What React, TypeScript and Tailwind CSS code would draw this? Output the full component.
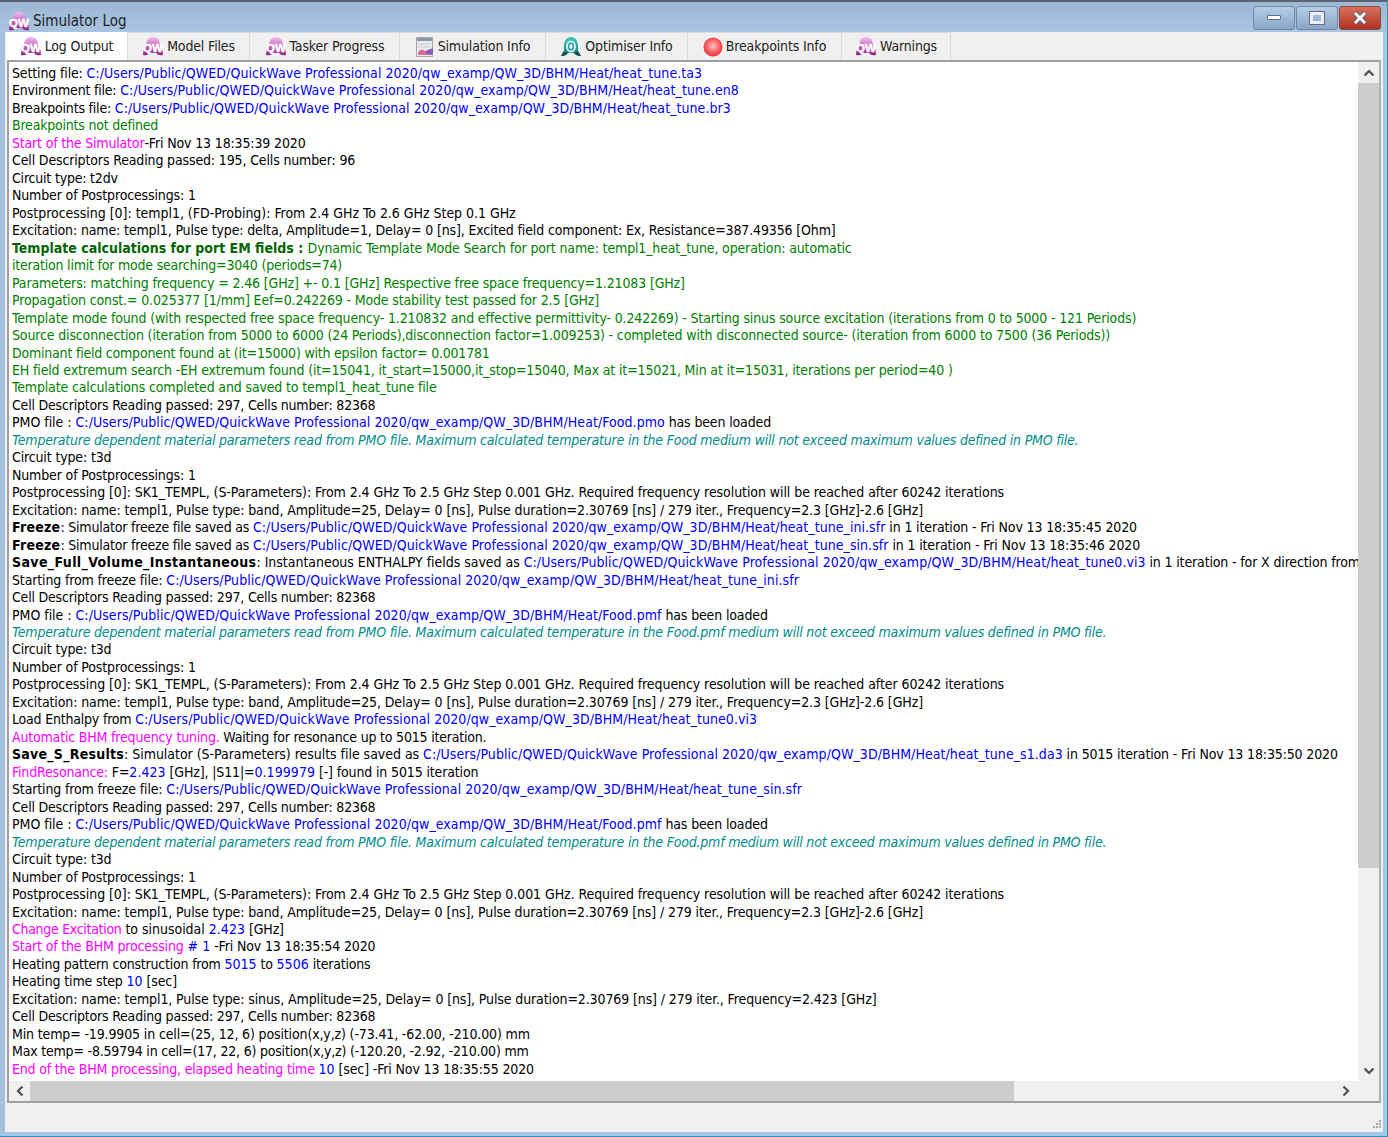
type Seg = [string, string];

const K = "text-black tracking-[-0.14px]";
const K0 = "text-black tracking-[-0.03px]";
const K1 = "text-black tracking-[-0.115px]";
const K2 = "text-black tracking-[-0.075px]";
const K3 = "text-black tracking-[-0.2px]";
const U = "text-[#0000ff] tracking-[0.06px]";
const G = "text-[#008000] tracking-[-0.146px]";
const G2 = "text-[#008000] tracking-[-0.21px]";
const DG = "font-bold text-[#006400]";
const M = "text-[#ff00ff] tracking-[-0.18px]";
const M2 = "text-[#ff00ff] tracking-[-0.3px]";
const T = "italic text-[#008b8b] tracking-[-0.2px]";
const B = "font-bold text-black tracking-[0.25px]";
const B2 = "font-bold text-black tracking-[0.38px]";

const base = "C:/Users/Public/QWED/QuickWave Professional 2020/qw_examp/QW_3D/BHM/Heat/";

const lines: Seg[][] = [
  [[K, "Setting file: "], [U, base + "heat_tune.ta3"]],
  [[K3, "Environment file: "], [U, base + "heat_tune.en8"]],
  [[K3, "Breakpoints file: "], [U, base + "heat_tune.br3"]],
  [[G2, "Breakpoints not defined"]],
  [[M, "Start of the Simulator"], [K, "-Fri Nov 13 18:35:39 2020"]],
  [[K, "Cell Descriptors Reading passed: 195, Cells number: 96"]],
  [[K3, "Circuit type: t2dv"]],
  [[K, "Number of Postprocessings: 1"]],
  [[K0, "Postprocessing [0]: templ1, (FD-Probing): From 2.4 GHz To 2.6 GHz Step 0.1 GHz"]],
  [[K, "Excitation: name: templ1, Pulse type: delta, Amplitude=1, Delay= 0 [ns], Excited field component: Ex, Resistance=387.49356 [Ohm]"]],
  [[DG, "Template calculations for port EM fields : "], [G, "Dynamic Template Mode Search for port name: templ1_heat_tune, operation: automatic"]],
  [[G2, "iteration limit for mode searching=3040 (periods=74)"]],
  [[G, "Parameters: matching frequency = 2.46 [GHz] +- 0.1 [GHz] Respective free space frequency=1.21083 [GHz]"]],
  [[G, "Propagation const.= 0.025377 [1/mm] Eef=0.242269 - Mode stability test passed for 2.5 [GHz]"]],
  [[G, "Template mode found (with respected free space frequency- 1.210832 and effective permittivity- 0.242269) - Starting sinus source excitation (iterations from 0 to 5000 - 121 Periods)"]],
  [[G, "Source disconnection (iteration from 5000 to 6000 (24 Periods),disconnection factor=1.009253) - completed with disconnected source- (iteration from 6000 to 7500 (36 Periods))"]],
  [[G2, "Dominant field component found at (it=15000) with epsilon factor= 0.001781"]],
  [[G, "EH field extremum search -EH extremum found (it=15041, it_start=15000,it_stop=15040, Max at it=15021, Min at it=15031, iterations per period=40 )"]],
  [[G, "Template calculations completed and saved to templ1_heat_tune file"]],
  [[K3, "Cell Descriptors Reading passed: 297, Cells number: 82368"]],
  [[K0, "PMO file : "], [U, base + "Food.pmo"], [K, " has been loaded"]],
  [[T, "Temperature dependent material parameters read from PMO file. Maximum calculated temperature in the Food medium will not exceed maximum values defined in PMO file."]],
  [[K, "Circuit type: t3d"]],
  [[K, "Number of Postprocessings: 1"]],
  [[K2, "Postprocessing [0]: SK1_TEMPL, (S-Parameters): From 2.4 GHz To 2.5 GHz Step 0.001 GHz. Required frequency resolution will be reached after 60242 iterations"]],
  [[K1, "Excitation: name: templ1, Pulse type: band, Amplitude=25, Delay= 0 [ns], Pulse duration=2.30769 [ns] / 279 iter., Frequency=2.3 [GHz]-2.6 [GHz]"]],
  [[B, "Freeze"], [K3, ": Simulator freeze file saved as "], [U, base + "heat_tune_ini.sfr"], [K, " in 1 iteration - Fri Nov 13 18:35:45 2020"]],
  [[B, "Freeze"], [K3, ": Simulator freeze file saved as "], [U, base + "heat_tune_sin.sfr"], [K, " in 1 iteration - Fri Nov 13 18:35:46 2020"]],
  [[B2, "Save_Full_Volume_Instantaneous"], [K0, ": Instantaneous ENTHALPY fields saved as "], [U, base + "heat_tune0.vi3"], [K, " in 1 iteration - for X direction from"]],
  [[K, "Starting from freeze file: "], [U, base + "heat_tune_ini.sfr"]],
  [[K3, "Cell Descriptors Reading passed: 297, Cells number: 82368"]],
  [[K0, "PMO file : "], [U, base + "Food.pmf"], [K, " has been loaded"]],
  [[T, "Temperature dependent material parameters read from PMO file. Maximum calculated temperature in the Food.pmf medium will not exceed maximum values defined in PMO file."]],
  [[K, "Circuit type: t3d"]],
  [[K, "Number of Postprocessings: 1"]],
  [[K2, "Postprocessing [0]: SK1_TEMPL, (S-Parameters): From 2.4 GHz To 2.5 GHz Step 0.001 GHz. Required frequency resolution will be reached after 60242 iterations"]],
  [[K1, "Excitation: name: templ1, Pulse type: band, Amplitude=25, Delay= 0 [ns], Pulse duration=2.30769 [ns] / 279 iter., Frequency=2.3 [GHz]-2.6 [GHz]"]],
  [[K3, "Load Enthalpy from "], [U, base + "heat_tune0.vi3"]],
  [[M, "Automatic BHM frequency tuning."], [K3, " Waiting for resonance up to 5015 iteration."]],
  [[B, "Save_S_Results"], [K0, ": Simulator (S-Parameters) results file saved as "], [U, base + "heat_tune_s1.da3"], [K, " in 5015 iteration - Fri Nov 13 18:35:50 2020"]],
  [[M, "FindResonance:"], [K, " F="], [U, "2.423"], [K, " [GHz], |S11|="], [U, "0.199979"], [K, " [-] found in 5015 iteration"]],
  [[K, "Starting from freeze file: "], [U, base + "heat_tune_sin.sfr"]],
  [[K3, "Cell Descriptors Reading passed: 297, Cells number: 82368"]],
  [[K0, "PMO file : "], [U, base + "Food.pmf"], [K, " has been loaded"]],
  [[T, "Temperature dependent material parameters read from PMO file. Maximum calculated temperature in the Food.pmf medium will not exceed maximum values defined in PMO file."]],
  [[K, "Circuit type: t3d"]],
  [[K, "Number of Postprocessings: 1"]],
  [[K2, "Postprocessing [0]: SK1_TEMPL, (S-Parameters): From 2.4 GHz To 2.5 GHz Step 0.001 GHz. Required frequency resolution will be reached after 60242 iterations"]],
  [[K1, "Excitation: name: templ1, Pulse type: band, Amplitude=25, Delay= 0 [ns], Pulse duration=2.30769 [ns] / 279 iter., Frequency=2.3 [GHz]-2.6 [GHz]"]],
  [[M2, "Change Excitation"], [K0, " to sinusoidal "], [U, "2.423"], [K, " [GHz]"]],
  [[M, "Start of the BHM processing"], [U, " # 1"], [K, " -Fri Nov 13 18:35:54 2020"]],
  [[K3, "Heating pattern construction from "], [U, "5015"], [K3, " to "], [U, "5506"], [K3, " iterations"]],
  [[K, "Heating time step "], [U, "10"], [K, " [sec]"]],
  [[K1, "Excitation: name: templ1, Pulse type: sinus, Amplitude=25, Delay= 0 [ns], Pulse duration=2.30769 [ns] / 279 iter., Frequency=2.423 [GHz]"]],
  [[K3, "Cell Descriptors Reading passed: 297, Cells number: 82368"]],
  [[K, "Min temp= -19.9905 in cell=(25, 12, 6) position(x,y,z) (-73.41, -62.00, -210.00) mm"]],
  [[K3, "Max temp= -8.59794 in cell=(17, 22, 6) position(x,y,z) (-120.20, -2.92, -210.00) mm"]],
  [[M, "End of the BHM processing, elapsed heating time "], [U, "10"], [K, " [sec] -Fri Nov 13 18:35:55 2020"]],
];

const QwIcon = () => (
  <svg width="22" height="21" viewBox="0 0 22 21" className="shrink-0">
    <defs>
      <linearGradient id="qw" x1="0" y1="0" x2="0" y2="1">
        <stop offset="0%" stopColor="#efc0ea" />
        <stop offset="45%" stopColor="#d070c8" />
        <stop offset="100%" stopColor="#8f1f85" />
      </linearGradient>
    </defs>
    <path d="M1 19 Q1 13 4 10 Q4 1 11 1 Q18 1 18 10 Q21 13 21 19 Q16 20 14 17 H8 Q6 20 1 19 Z" fill="url(#qw)" />
    <text x="11" y="15.5" textAnchor="middle" fontSize="11.5" fontWeight="700" fontFamily="Liberation Sans, sans-serif" stroke="#ffffff" strokeWidth="0.5" fill="#ffffff">QW</text>
  </svg>
);

const OptIcon = () => (
  <svg width="22" height="22" viewBox="0 0 22 22" className="shrink-0">
    <defs>
      <linearGradient id="opt" x1="0" y1="0" x2="0" y2="1">
        <stop offset="0%" stopColor="#3ec8bc" />
        <stop offset="100%" stopColor="#0f7f78" />
      </linearGradient>
    </defs>
    <path d="M1 20 L4 15 Q3 1 11 1 Q19 1 18 15 L21 20 Q16 20 14 17 H8 Q6 20 1 20 Z" fill="url(#opt)" />
    <ellipse cx="11" cy="10.5" rx="5" ry="6" fill="#d6f4f0" />
    <ellipse cx="11" cy="10.5" rx="3" ry="4" fill="#1c9c94" />
    <ellipse cx="11" cy="10.5" rx="1.6" ry="2.4" fill="#f4ffff" />
    <path d="M1 20 L4 15 L8 17 Q6 20 1 20 Z M21 20 L18 15 L14 17 Q16 20 21 20 Z" fill="#174f50" />
  </svg>
);

const InfoIcon = () => (
  <svg width="20" height="22" viewBox="0 0 20 22" className="shrink-0">
    <rect x="1.5" y="1.5" width="16" height="19" fill="#ececec" stroke="#a8a8a8" />
    <rect x="2" y="2" width="15" height="3" fill="#8698aa" />
    <path d="M3 8h13M3 11h13" stroke="#cccccc" />
    <path d="M3 17 Q5 12 8 14 T13 14 L17 13 V19 H3 Z" fill="#d86c96" />
    <path d="M11 15 L18 12 V18 H11 Z" fill="#8a5ac0" />
  </svg>
);

const RedDot = () => (
  <svg width="20" height="20" viewBox="0 0 20 20" className="shrink-0">
    <defs>
      <radialGradient id="dot" cx="50%" cy="45%" r="55%">
        <stop offset="0%" stopColor="#ffc4c4" />
        <stop offset="65%" stopColor="#fa5a5e" />
        <stop offset="100%" stopColor="#e8343a" />
      </radialGradient>
    </defs>
    <circle cx="10" cy="10" r="9.5" fill="url(#dot)" />
  </svg>
);

const tabs = [
  { label: "Log Output", icon: <QwIcon />, w: "w-[122px]", active: true },
  { label: "Model Files", icon: <QwIcon />, w: "w-[122px]" },
  { label: "Tasker Progress", icon: <QwIcon />, w: "w-[150px]" },
  { label: "Simulation Info", icon: <InfoIcon />, w: "w-[146px]" },
  { label: "Optimiser Info", icon: <OptIcon />, w: "w-[142px]" },
  { label: "Breakpoints Info", icon: <RedDot />, w: "w-[154px]" },
  { label: "Warnings", icon: <QwIcon />, w: "w-[109px]" },
];

const Chevron = ({ d }: { d: string }) => (
  <svg width="12" height="12" viewBox="0 0 12 12">
    <path d={d} fill="none" stroke="#505050" strokeWidth="2.2" />
  </svg>
);

export default function App() {
  return (
    <div className="w-[1388px] h-[1137px] border-r border-b border-[#2f8db8] overflow-hidden">
      <div className="h-full flex flex-col border-l-[5px] border-r-[4px] border-b-[4px] border-l-[#a5c0da] border-r-[#a5c8e6] border-b-[#a5c8e6] bg-[#a4bdd8] font-['DejaVu_Sans',sans-serif] [font-stretch:condensed] text-[14px] text-black">
        <div className="h-[32px] shrink-0 flex items-center justify-between -ml-[5px] -mr-[4px] pl-[8px] pr-[6px] pt-[8px] border-t-2 border-t-[#5a6470] bg-gradient-to-b from-[#9db8d4] to-[#a8c4e0]">
          <div className="flex items-center gap-[3px] text-[15px] text-[#222]">
            <QwIcon />
            <span>Simulator Log</span>
          </div>
          <div className="flex gap-[1px] mb-[7px]">
            <div className="w-[42px] h-[24px] rounded-[3px] border border-[#7088a8] bg-gradient-to-b from-[#b5cde6] to-[#89a6c6] flex items-center justify-center">
              <div className="w-[14px] h-[5px] rounded-[1px] bg-white border border-[#606c80]" />
            </div>
            <div className="w-[42px] h-[24px] rounded-[3px] border border-[#7088a8] bg-gradient-to-b from-[#b5cde6] to-[#89a6c6] flex items-center justify-center">
              <div className="w-[14px] h-[12px] border-[3px] border-[#eeeeff] outline outline-1 outline-[#606c80]" />
            </div>
            <div className="w-[42px] h-[24px] rounded-[3px] border border-[#8a4a40] bg-gradient-to-b from-[#d8705c] to-[#b03020] flex items-center justify-center">
              <svg width="16" height="14" viewBox="0 0 16 14">
                <path d="M3 2 L13 12 M13 2 L3 12" stroke="#5a5a6a" strokeWidth="5" />
                <path d="M3 2 L13 12 M13 2 L3 12" stroke="#ffffff" strokeWidth="3" />
              </svg>
            </div>
          </div>
        </div>

        <div className="flex-1 min-h-0 flex flex-col bg-[#f0f0f0]">
          <div className="h-[28px] shrink-0 flex pl-[1px]">
            {tabs.map((t) => (
              <div
                key={t.label}
                className={`${t.w} shrink-0 flex items-center justify-center gap-[3px] border-r border-[#d9d9d9] ${t.active ? "bg-white" : "bg-[#f0f0f0] border-t border-t-[#dcdcdc]"}`}
              >
                {t.icon}
                <span className="text-[#222] tracking-[-0.15px]">{t.label}</span>
              </div>
            ))}
          </div>

          <div className="ml-[2px] mr-[2px] h-[1043px] shrink-0 border-2 border-[#a0a0a0] border-r-[#b0b0b0] flex flex-col bg-white">
            <div className="flex-1 min-h-0 flex">
              <div className="flex-1 min-w-0 overflow-hidden pl-[3px] pt-[3px]">
                {lines.map((line, i) => (
                  <div key={i} className="h-[17.47px] leading-[17.47px] whitespace-pre">
                    {line.map((seg, j) => (
                      <span key={j} className={seg[0]}>{seg[1]}</span>
                    ))}
                  </div>
                ))}
              </div>
              <div className="w-[21px] shrink-0 flex flex-col bg-[#f0f0f0]">
                <div className="h-[21px] flex items-center justify-center"><Chevron d="M1.5 8.5 L6 4 L10.5 8.5" /></div>
                <div className="h-[785px] bg-[#cdcdcd]" />
                <div className="flex-1" />
                <div className="h-[21px] flex items-center justify-center"><Chevron d="M1.5 3.5 L6 8 L10.5 3.5" /></div>
              </div>
            </div>
            <div className="h-[20px] shrink-0 flex bg-[#f0f0f0]">
              <div className="w-[21px] flex items-center justify-center"><Chevron d="M8.5 1.5 L4 6 L8.5 10.5" /></div>
              <div className="w-[984px] bg-[#cdcdcd]" />
              <div className="flex-1" />
              <div className="w-[21px] mr-[23px] flex items-center justify-center"><Chevron d="M3.5 1.5 L8 6 L3.5 10.5" /></div>
            </div>
          </div>

          <div className="flex-1 flex items-end justify-end pr-[1px] pb-[2px]">
            <svg width="10" height="10" viewBox="0 0 10 10" fill="#a8a8a8">
              <rect x="7" y="0" width="2" height="2" />
              <rect x="4" y="3" width="2" height="2" />
              <rect x="7" y="3" width="2" height="2" />
              <rect x="1" y="6" width="2" height="2" />
              <rect x="4" y="6" width="2" height="2" />
              <rect x="7" y="6" width="2" height="2" />
            </svg>
          </div>
        </div>
      </div>
    </div>
  );
}
